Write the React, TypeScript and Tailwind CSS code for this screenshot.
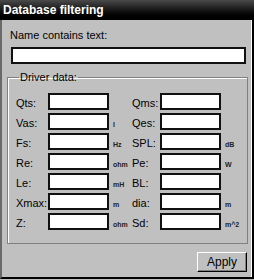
const left = [
  { label: "Qts:", unit: "" },
  { label: "Vas:", unit: "l" },
  { label: "Fs:", unit: "Hz" },
  { label: "Re:", unit: "ohm" },
  { label: "Le:", unit: "mH" },
  { label: "Xmax:", unit: "m" },
  { label: "Z:", unit: "ohm" },
];

const right = [
  { label: "Qms:", unit: "" },
  { label: "Qes:", unit: "" },
  { label: "SPL:", unit: "dB" },
  { label: "Pe:", unit: "W" },
  { label: "BL:", unit: "" },
  { label: "dia:", unit: "m" },
  { label: "Sd:", unit: "m^2" },
];

function Field({ label, unit, labelW }: { label: string; unit: string; labelW: string }) {
  return (
    <div className="flex items-stretch h-[17px]">
      <span className={`${labelW} flex items-center pt-[3px] leading-none`}>{label}</span>
      <input
        type="text"
        className="w-[61px] h-[17px] bg-white border-2 border-[#111] outline-none"
      />
      <span className="flex-1 pl-[4px] flex items-end pb-[2px] text-[7px] leading-none font-bold text-[#222]">
        {unit}
      </span>
    </div>
  );
}

export default function App() {
  return (
    <div className="w-[254px] h-[280px] bg-[#c0c0c0] flex flex-col font-['Liberation_Sans',Arial,sans-serif] text-black">
      <div className="h-[20px] bg-gradient-to-b from-[#4a4a4a] to-black text-white font-bold text-[12px] pl-[3px] pt-[4px] leading-none">
        Database filtering
      </div>

      <div className="flex-1 mb-[1px] flex flex-col border-l-2 border-l-[#6a6a6a] border-r-2 border-r-black border-b-2 border-b-black shadow-[inset_-1px_0_0_white]">
        <div className="pt-[9px] pl-[8px] text-[11px] leading-[13px]">Name contains text:</div>
        <input
          type="text"
          className="mt-[5px] ml-[9px] w-[235px] h-[17px] bg-white border-2 border-[#111] outline-none"
        />

        <fieldset className="mt-[7px] ml-[5px] w-[238px] border border-[#808080] shadow-[inset_1px_1px_0_white] px-[8px] pt-[9px] pb-[13px] text-[11px]">
          <legend className="ml-[3px] px-[1px] leading-[13px]">Driver data:</legend>
          <div className="grid grid-cols-[116px_1fr]">
            <div className="flex flex-col gap-[3px]">
              {left.map((f) => (
                <Field key={f.label} {...f} labelW="w-[32px]" />
              ))}
            </div>
            <div className="flex flex-col gap-[3px]">
              {right.map((f) => (
                <Field key={f.label} {...f} labelW="w-[28px]" />
              ))}
            </div>
          </div>
        </fieldset>

        <div className="flex justify-end mt-[8px] pr-[5px]">
          <button className="w-[50px] h-[20px] text-[12px] bg-[#c0c0c0] border border-t-white border-l-white border-b-black border-r-black shadow-[inset_-1px_-1px_0_#808080]">
            Apply
          </button>
        </div>
      </div>
    </div>
  );
}
